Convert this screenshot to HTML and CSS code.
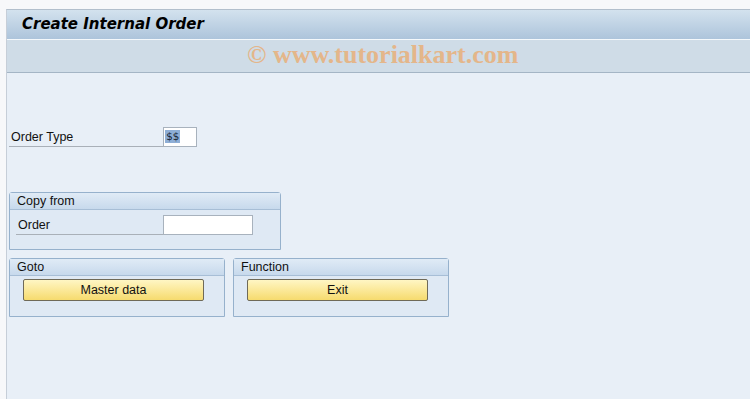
FILE: index.html
```html
<!DOCTYPE html>
<html lang="en">
<head>
  <meta charset="UTF-8">
  <title>Create Internal Order</title>
  <link rel="stylesheet" href="styles.css">
</head>
<body>
  <div class="topstrip"></div>
  <div class="shell">
    <div class="titlebar">
      <h1>Create Internal Order</h1>
    </div>
    <div class="toolbar">
      <span class="mark">&copy; www.tutorialkart.com</span>
    </div>
    <div class="content">
      <div class="field first">
        <label class="lbl" for="otype">Order Type</label>
        <div class="inp short" id="otype"><span class="sel">$$</span></div>
      </div>

      <div class="group copy">
        <div class="ghead">Copy from</div>
        <div class="gbody">
          <div class="field">
            <label class="lbl inner" for="order">Order</label>
            <div class="inp long" id="order"></div>
          </div>
        </div>
      </div>

      <div class="grow">
        <div class="group half">
          <div class="ghead">Goto</div>
          <div class="gbody">
            <button class="btn">Master data</button>
          </div>
        </div>
        <div class="group half">
          <div class="ghead">Function</div>
          <div class="gbody">
            <button class="btn">Exit</button>
          </div>
        </div>
      </div>
    </div>
  </div>
</body>
</html>
```

FILE: styles.css
```css
* {
  margin: 0;
  padding: 0;
  box-sizing: border-box;
}
body {
  font-family: "Liberation Sans", Arial, sans-serif;
  font-size: 12.5px;
  color: #111;
  background: #f7f8fa;
  height: 399px;
  overflow: hidden;
}
.topstrip {
  height: 9px;
  background: #f7f8fa;
}
.shell {
  margin-left: 6px;
  border-left: 1px solid #c6ced8;
  border-top: 1px solid #b2bfcc;
  height: 390px;
  background: #e8eff7;
}
.titlebar {
  height: 30px;
  background: linear-gradient(#d3e2ee, #adc4db);
  border-bottom: 1px solid #f4f8fb;
  padding-left: 15px;
}
.titlebar h1 {
  font-family: "DejaVu Sans", Verdana, sans-serif;
  font-size: 15px;
  font-weight: bold;
  font-style: italic;
  line-height: 28px;
  color: #000;
}
.toolbar {
  height: 33px;
  background: #cfdce7;
  border-bottom: 1px solid #a4b5c5;
  padding-left: 240px;
  padding-top: 2px;
}
.mark {
  font-family: "Liberation Serif", "Times New Roman", serif;
  font-weight: bold;
  font-size: 26px;
  line-height: 26px;
  color: #e8b07a;
  opacity: 0.85;
}
.content {
  padding: 54px 0 0 2px;
}
.field {
  display: flex;
  align-items: flex-end;
  height: 20px;
}
.lbl {
  width: 154px;
  height: 20px;
  line-height: 21px;
  padding-left: 2px;
  border-bottom: 1px solid #a9b0b8;
}
.lbl.inner {
  width: 147px;
}
.inp {
  height: 20px;
  background: #fff;
  border: 1px solid #a8b2bd;
  padding: 3px 1px;
  font-family: "DejaVu Sans Mono", monospace;
  font-size: 11px;
  line-height: 12px;
}
.inp.short {
  width: 34px;
}
.inp.long {
  width: 90px;
}
.sel {
  background: #8eaed6;
  color: #1d2b3a;
  padding: 0 1px;
}
.group {
  border: 1px solid #96b1cc;
  border-radius: 3px 3px 0 0;
  background: #dfe9f4;
}
.ghead {
  height: 17px;
  line-height: 16px;
  padding-left: 7px;
  background: linear-gradient(#e0ebf6, #c7d9ec);
  border-bottom: 1px solid #a7bed6;
}
.copy {
  width: 272px;
  height: 58px;
  margin-top: 45px;
}
.copy .gbody {
  padding: 5px 0 0 6px;
}
.grow {
  display: flex;
  gap: 8px;
  margin-top: 8px;
}
.half {
  width: 216px;
  height: 59px;
}
.half .gbody {
  padding: 3px 0 0 13px;
}
.btn {
  width: 181px;
  height: 22px;
  font-family: "Liberation Sans", Arial, sans-serif;
  font-size: 12.5px;
  color: #111;
  background: linear-gradient(#fff6c4, #f6db6e);
  border: 1px solid #6f6a58;
  border-radius: 2px;
}
```
